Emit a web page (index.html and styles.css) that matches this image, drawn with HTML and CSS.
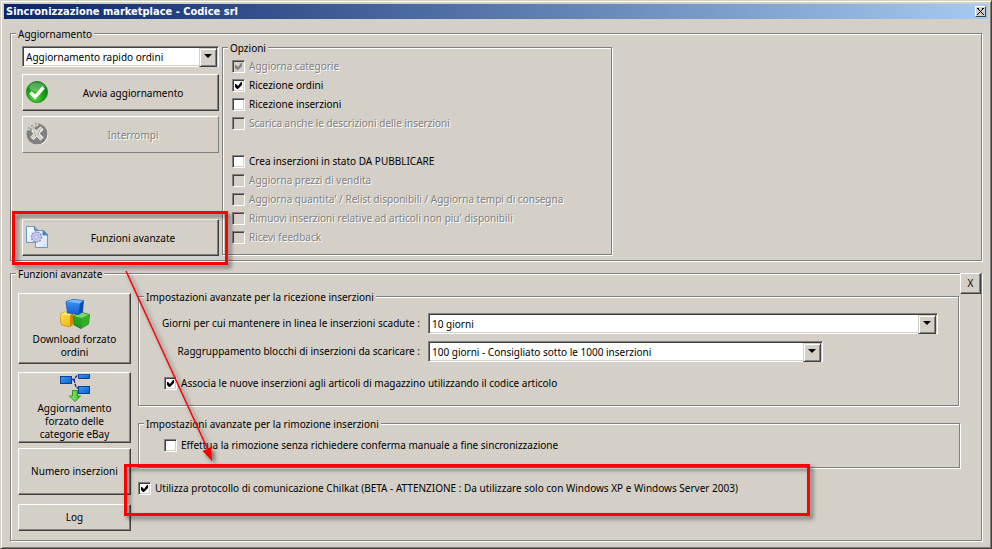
FILE: index.html
```html
<!DOCTYPE html>
<html lang="it">
<head>
<meta charset="utf-8">
<title>Sincronizzazione marketplace - Codice srl</title>
<link rel="stylesheet" href="styles.css">
</head>
<body>
<main class="window">
  <header class="titlebar">
    <h1 class="title">Sincronizzazione marketplace - Codice srl</h1>
    <button class="close" type="button" aria-label="Chiudi">
      <svg width="7" height="7" viewBox="0 0 7 7" shape-rendering="crispEdges"><path d="M0 0h1v1H0zM1 1h1v1H1zM2 2h1v1H2zM3 3h1v1H3zM4 4h1v1H4zM5 5h1v1H5zM6 6h1v1H6zM6 0h1v1H6zM5 1h1v1H5zM4 2h1v1H4zM2 4h1v1H2zM1 5h1v1H1zM0 6h1v1H0zM1 0h1v1H1zM5 0h1v1H5z"/></svg>
    </button>
  </header>

  <fieldset class="group update">
    <legend>Aggiornamento</legend>
    <div class="update-body">
      <div class="actions">
        <span class="combo">
          <select aria-label="Tipo di aggiornamento"><option>Aggiornamento rapido ordini</option></select>
        </span>
        <button class="btn wide" type="button">
          <svg class="icon" viewBox="0 0 22 22">
            <defs>
              <radialGradient id="green" cx=".4" cy=".75" r=".75"><stop offset="0" stop-color="#5fe03a"/><stop offset=".5" stop-color="#1fa51c"/><stop offset="1" stop-color="#08780c"/></radialGradient>
            </defs>
            <circle cx="11" cy="11" r="10.6" fill="url(#green)" stroke="#1d8a1c" stroke-width=".8"/>
            <ellipse cx="11" cy="6" rx="8" ry="4.500" fill="#fff" opacity=".28"/>
            <path d="M4.500 11.500 9 16 17.500 6.500" fill="none" stroke="#fff" stroke-width="3.400"/>
          </svg>
          <span class="caption">Avvia aggiornamento</span>
        </button>
        <button class="btn wide" type="button" disabled>
          <svg class="icon" viewBox="0 0 22 22">
            <circle cx="12" cy="12" r="10" fill="#fff"/>
            <circle cx="11" cy="11" r="10.500" fill="#808080"/>
            <path d="M1 7 3 3 8 0h6l-2 3-4 2-1 4-3-2-3 1z" fill="#d4d0c8"/>
            <path d="M2 5h2m1-2h2m2-2h2m1 0h2M4 6h2m3-2h2m-4 1h1M1 8h1m3 0h1" stroke="#808080" stroke-width="1.200"/>
            <path d="m7 7 3.500 3.500L16 5m-5.500 5.500L16 16m-5.500-5.500L6 15.500" fill="none" stroke="#fff" stroke-width="4.400"/>
            <path d="m7 6 3.500 4.500L15.500 5m-5 5.500 5 5.500m-5-5.500L6 15" fill="none" stroke="#d4d0c8" stroke-width="3.200"/>
            <path d="M8 10h1m3 1h1m-4 2h1m3-5h1" stroke="#808080"/>
          </svg>
          <span class="caption">Interrompi</span>
        </button>
        <button class="btn wide last" type="button">
          <svg class="icon" viewBox="0 0 22 22">
            <defs>
              <linearGradient id="sheet" x2="1" y2="1"><stop offset="0" stop-color="#fff"/><stop offset="1" stop-color="#cfe2fb"/></linearGradient>
            </defs>
            <path d="M.5.500h8l3.500 3.500v12.500H.5z" fill="url(#sheet)" stroke="#6f93c4"/>
            <path d="M8.500.500V4H12" fill="#7fb4e6" stroke="#4f80b5"/>
            <path d="M9.500 4.500h8l4 4v13h-12z" fill="url(#sheet)" stroke="#6f93c4"/>
            <path d="M17 4.500V9h4.500z" fill="#3f8bb0" stroke="#4f80b5"/>
            <circle cx="10.500" cy="11" r="5" fill="#c9cbef" stroke="#8f93cf" stroke-width="1.600" stroke-dasharray="2 1"/>
            <circle cx="10.500" cy="11" r="3.800" fill="#c3c6ee"/>
            <circle cx="10.500" cy="11" r="1.600" fill="#eef0ff" stroke="#9a9ed6" stroke-width=".8"/>
          </svg>
          <span class="caption">Funzioni avanzate</span>
        </button>
      </div>

      <fieldset class="group options">
        <legend>Opzioni</legend>
        <label class="check off"><input type="checkbox" checked disabled>Aggiorna categorie</label>
        <label class="check"><input type="checkbox" checked>Ricezione ordini</label>
        <label class="check"><input type="checkbox">Ricezione inserzioni</label>
        <label class="check off"><input type="checkbox" disabled>Scarica anche le descrizioni delle inserzioni</label>
        <label class="check spaced"><input type="checkbox">Crea inserzioni in stato DA PUBBLICARE</label>
        <label class="check off"><input type="checkbox" disabled>Aggiorna prezzi di vendita</label>
        <label class="check off"><input type="checkbox" disabled>Aggiorna quantita' / Relist disponibili / Aggiorna tempi di consegna</label>
        <label class="check off"><input type="checkbox" disabled>Rimuovi inserzioni relative ad articoli non piu' disponibili</label>
        <label class="check off"><input type="checkbox" disabled>Ricevi feedback</label>
      </fieldset>
    </div>
  </fieldset>

  <fieldset class="group advanced">
    <legend>Funzioni avanzate</legend>
    <button class="btn dismiss" type="button">X</button>
    <div class="advanced-body">
      <div class="tools">
        <button class="btn tall" type="button">
          <svg class="pic" viewBox="0 0 30 30">
            <defs>
              <linearGradient id="bl" x2="0" y2="1"><stop offset="0" stop-color="#3f96f2"/><stop offset="1" stop-color="#1560d4"/></linearGradient>
              <linearGradient id="ye" x2="1" y2="1"><stop offset="0" stop-color="#ffe04a"/><stop offset="1" stop-color="#f0b010"/></linearGradient>
              <linearGradient id="gr" x2="0" y2="1"><stop offset="0" stop-color="#35ad2c"/><stop offset="1" stop-color="#1c9a1a"/></linearGradient>
            </defs>
            <path d="m0 15.500 4-2.500 9 1v11.500L9 28l-8-2.500z" fill="url(#ye)" stroke="#b98305" stroke-width=".7"/>
            <path d="m.5 15.500 4-2.200 8 .8-2.500 2.400z" fill="#ffea80"/>
            <path d="m10 16.500 3-2.500v11.500L10 28z" fill="#c88b05"/>
            <path d="m13.500 17 8.500-3.500 7.500 2-1 9.500-7.500 4.500-7-3.500z" fill="url(#gr)" stroke="#0f6f10" stroke-width=".7"/>
            <path d="m14 17 8-3.200 7 1.900-7 3.300z" fill="#7fd968"/>
            <path d="m22 19 7.500-3.500-1 9.500-7.500 4.500z" fill="#2fae28"/>
            <path d="m6 2.500 7-2 10.500 1-1 11.500-4 2.500L7.500 14z" fill="url(#bl)" stroke="#0a47a6" stroke-width=".7"/>
            <path d="m6.300 2.600 7-1.800 9.800 1L20 4.500z" fill="#79bcff"/>
            <path d="m20 4.500 3.500-3-1 11.500-4 2.500z" fill="#0b4bb0"/>
          </svg>
          <span>Download forzato ordini</span>
        </button>
        <button class="btn tall flow" type="button">
          <svg class="pic short" viewBox="0 0 30 28">
            <defs>
              <linearGradient id="node" x2="1" y2="1"><stop offset="0" stop-color="#3a9bf0"/><stop offset="1" stop-color="#0a62cc"/></linearGradient>
              <linearGradient id="down" x2="1"><stop offset="0" stop-color="#a6f27a"/><stop offset="1" stop-color="#2fb81f"/></linearGradient>
            </defs>
            <path d="M12 5.500h2l3-4h2M14 6l2 7 3 2" fill="none" stroke="#26268c" stroke-width="1.400" stroke-dasharray="3 1"/>
            <rect x=".5" y="2.500" width="11" height="7" fill="url(#node)" stroke="#0c3f96"/>
            <path d="M18.500 0v4.500h11V0z" fill="url(#node)" stroke="#0c3f96"/>
            <rect x="18.500" y="12.500" width="11" height="7" fill="url(#node)" stroke="#0c3f96"/>
            <path d="M12.500 16.500h5V22h3L15 27.500 9.500 22h3z" fill="url(#down)" stroke="#239a1b"/>
          </svg>
          <span>Aggiornamento forzato delle categorie eBay</span>
        </button>
        <button class="btn medium" type="button">Numero inserzioni</button>
        <button class="btn low" type="button">Log</button>
      </div>

      <div class="settings">
        <fieldset class="group receive">
          <legend>Impostazioni avanzate per la ricezione inserzioni</legend>
          <div class="fields">
            <label for="days">Giorni per cui mantenere in linea le inserzioni scadute :</label>
            <span class="combo"><select id="days"><option>10 giorni</option></select></span>
            <label for="blocks">Raggruppamento blocchi di inserzioni da scaricare :</label>
            <span class="combo limited"><select id="blocks"><option>100 giorni - Consigliato sotto le 1000 inserzioni</option></select></span>
          </div>
          <label class="check indented"><input type="checkbox" checked>Associa le nuove inserzioni agli articoli di magazzino utilizzando il codice articolo</label>
        </fieldset>
        <fieldset class="group remove">
          <legend>Impostazioni avanzate per la rimozione inserzioni</legend>
          <label class="check indented"><input type="checkbox">Effettua la rimozione senza richiedere conferma manuale a fine sincronizzazione</label>
        </fieldset>
        <label class="check protocol"><input type="checkbox" checked>Utilizza protocollo di comunicazione Chilkat (BETA - ATTENZIONE : Da utilizzare solo con Windows XP e Windows Server 2003)</label>
      </div>
    </div>
  </fieldset>

  <svg class="callouts" width="830" height="530" viewBox="0 0 830 530" aria-hidden="true">
    <g fill="none" stroke="#f00" stroke-width="3">
      <rect x="13.500" y="212.500" width="213" height="51"/>
      <rect x="125.500" y="465.500" width="683" height="49"/>
      <path d="M126 271 208 450" stroke-width="1.500"/>
    </g>
    <path d="m212 461-9.500-10 8.500-4z" fill="#f00"/>
  </svg>
</main>
</body>
</html>
```
FILE: styles.css
```css
:root {
  --face: #d4d0c8;
  --shadow: #808080;
  --dark: #404040;
}

* {
  box-sizing: border-box;
}

body {
  margin: 0;
  background: var(--face);
  color: #000;
  font: 10px/13px "Noto Sans", "Open Sans", sans-serif;
}

button,
select,
input {
  margin: 0;
  font: inherit;
  color: inherit;
}

.window {
  position: relative;
  display: flex;
  flex-direction: column;
  min-height: 100vh;
  padding: 3px 8px 7px;
  border: 1px solid;
  border-color: var(--face) var(--dark) var(--dark) var(--face);
  box-shadow: inset 1px 1px #fff, inset -1px -1px var(--shadow);
}

.titlebar {
  display: flex;
  align-items: center;
  justify-content: space-between;
  height: 15px;
  margin: 0 -5px 7px;
  padding: 0 2px;
  background: linear-gradient(to right, #0a246a, #a6caf0);
}

.title {
  margin: 0;
  color: #fff;
  font: bold 11px/17px "DejaVu Sans Condensed", sans-serif;
}

.close {
  display: flex;
  align-items: center;
  justify-content: center;
  width: 11px;
  height: 11px;
  padding: 0;
  background: var(--face);
  border: 1px solid;
  border-color: #fff var(--dark) var(--dark) #fff;
}

.group {
  min-width: 0;
  margin: 0;
  padding: 0;
  border: 1px solid var(--shadow);
  box-shadow: 1px 1px #fff, inset 1px 1px #fff;
}

.group > legend {
  height: 14px;
  margin-left: 5px;
  padding: 0 2px;
  background: var(--face);
  line-height: 16px;
}

.update {
  margin: 0 1px 5px;
}

.update-body {
  display: flex;
  gap: 3px;
  padding: 0 11px 5px;
}

.actions {
  display: flex;
  flex-direction: column;
  width: 197px;
  padding-top: 6px;
  margin-bottom: -1px;
}

.options {
  width: 390px;
  padding: 3px 9px 7px;
}

.options > legend {
  margin-left: -4px;
}

.combo {
  position: relative;
  display: block;
  height: 21px;
}

.combo::before {
  content: "";
  position: absolute;
  top: 2px;
  right: 2px;
  width: 16px;
  height: 17px;
  background: var(--face);
  border: 1px solid;
  border-color: var(--face) var(--dark) var(--dark) var(--face);
  box-shadow: inset 1px 1px #fff, inset -1px -1px var(--shadow);
  pointer-events: none;
}

.combo::after {
  content: "";
  position: absolute;
  top: 8px;
  right: 7px;
  border: solid transparent;
  border-width: 4px 4px 0;
  border-top-color: #000;
  pointer-events: none;
}

.combo select {
  appearance: none;
  display: block;
  width: 100%;
  height: 21px;
  padding: 1px 20px 0 3px;
  background: #fff;
  border: 1px solid;
  border-color: var(--shadow) #fff #fff var(--shadow);
  border-radius: 0;
  box-shadow: inset 1px 1px var(--dark), inset -1px -1px var(--face);
}

.btn {
  display: flex;
  align-items: center;
  justify-content: center;
  padding: 0;
  background: var(--face);
  border: 1px solid;
  border-color: #fff var(--dark) var(--dark) #fff;
  border-radius: 0;
  box-shadow: inset -1px -1px var(--shadow);
}

.btn:disabled {
  border-color: #fff var(--shadow) var(--shadow) #fff;
  box-shadow: none;
}

.btn:disabled,
.off {
  color: var(--shadow);
  text-shadow: 1px 1px #fff;
}

.wide {
  height: 37px;
  margin-top: 5px;
  padding: 0 0 2px 3px;
}

.combo + .wide {
  margin-top: 7px;
}

.wide.last {
  margin-top: auto;
}

.icon {
  flex: none;
  width: 22px;
  height: 22px;
}

.caption {
  flex: 1;
  padding-top: 4px;
}

.check {
  display: flex;
  align-items: center;
  gap: 4px;
  height: 19px;
}

.check.spaced {
  margin-top: 19px;
}

.check input {
  appearance: none;
  position: relative;
  flex: none;
  width: 13px;
  height: 13px;
  background: #fff;
  border: 1px solid;
  border-color: var(--shadow) #fff #fff var(--shadow);
  box-shadow: inset 1px 1px var(--dark), inset -1px -1px var(--face);
}

.check input:disabled {
  background: var(--face);
}

.check input:checked::after {
  content: "";
  position: absolute;
  top: 2px;
  left: 2px;
  width: 7px;
  height: 7px;
  background: #000;
  clip-path: polygon(0 2px, 1px 2px, 3px 4px, 6px 0, 7px 0, 7px 3px, 3px 7px, 2px 7px, 0 5px);
}

.check input:disabled:checked::after {
  background: var(--shadow);
}

.advanced {
  position: relative;
  flex: 1;
  margin: 0 1px;
}

.advanced > legend {
  margin-left: 5px;
}

.dismiss {
  position: absolute;
  top: -7px;
  right: 0;
  width: 21px;
  height: 21px;
}

.advanced-body {
  display: flex;
  gap: 7px;
  padding: 9px 21px 8px 7px;
}

.tools {
  display: flex;
  flex-direction: column;
  flex: none;
  width: 113px;
  padding-top: 4px;
}

.tall {
  flex-direction: column;
  height: 71px;
  padding: 0 8px;
}

.tall .pic {
  width: 30px;
  height: 30px;
  margin-bottom: 4px;
}

.tall.flow {
  margin: 8px 0 5px;
  padding: 0 16px;
}

.tall .short {
  height: 28px;
  margin-bottom: 0;
}

.medium {
  height: 47px;
}

.low {
  height: 27px;
  margin-top: 9px;
}

.settings {
  flex: 1;
  min-width: 0;
}

.receive {
  margin-right: 1px;
  padding-bottom: 12px;
}

.fields {
  display: grid;
  grid-template-columns: 281px 1fr;
  align-items: center;
  gap: 7px 8px;
  padding: 10px 20px 12px 0;
}

.fields label {
  text-align: right;
}

.limited {
  max-width: 395px;
}

.indented {
  margin-left: 25px;
}

.remove {
  margin-top: 10px;
  padding: 6px 0 12px;
}

.protocol {
  margin-top: 11px;
}

.callouts {
  position: absolute;
  top: -1px;
  left: -1px;
  filter: drop-shadow(3px 3px 2px rgba(0, 0, 0, 0.5));
  pointer-events: none;
}
```
